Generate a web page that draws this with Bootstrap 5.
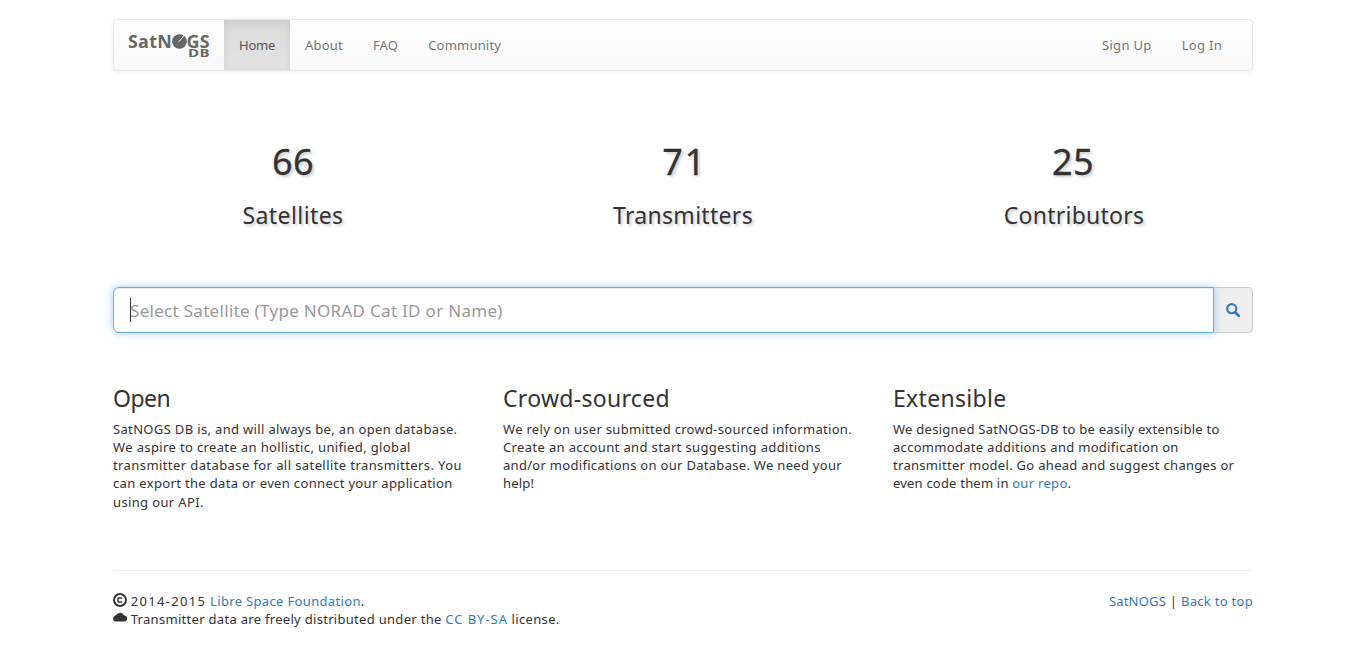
<!DOCTYPE html>
<html lang="en">
<head>
<meta charset="utf-8">
<meta name="viewport" content="width=device-width, initial-scale=1">
<title>SatNOGS DB</title>
<link href="https://cdn.jsdelivr.net/npm/bootstrap@5.3.0/dist/css/bootstrap.min.css" rel="stylesheet">
<script src="https://cdn.jsdelivr.net/npm/bootstrap@5.3.0/dist/js/bootstrap.bundle.min.js" defer></script>
<style>
body{font:13px/18.2px "Noto Sans","Open Sans",sans-serif;color:#333;background:#fff;letter-spacing:.3px;overflow:hidden;padding-left:1px}
a{color:#337ab7;text-decoration:none}
.page{max-width:1170px;--bs-gutter-x:30px}
.page .row{--bs-gutter-x:30px}
.topbar{height:52px;margin-top:19px;border:1px solid #e7e7e7;border-radius:4px;background:linear-gradient(#fff,#f8f8f8);box-shadow:inset 0 1px 0 rgba(255,255,255,.15),0 1px 5px rgba(0,0,0,.075)}
.topbar .nav-link{color:#777;padding:0 15px;line-height:50px;height:50px}
.topbar .nav-link.active{color:#555;background:linear-gradient(#dbdbdb,#e2e2e2);box-shadow:inset 0 3px 9px rgba(0,0,0,.075);letter-spacing:-.25px}
.topbar .login{margin-right:15px}
.logo{display:block;margin:0 14px;width:82px;height:50px}
.stats{margin-top:66px;text-shadow:2px 2px 3px #ccc}
.stats h1{font-size:36px;line-height:40px;font-weight:400;margin:5px 0 20px;letter-spacing:.3px;-webkit-text-stroke:.3px #333}
.stats h1.k-1{letter-spacing:1.6px;padding-left:3px}
.stats h3{font-size:23px;line-height:26px;font-weight:400;margin:0}
.stats h3.nudge{padding-left:2px}
.finder{margin-top:59px;height:46px}
.finder .form-control{font-size:17px;line-height:24px;padding:11px 16px 9px;border:1px solid #66afe9;border-radius:6px 0 0 6px;box-shadow:inset 0 1px 1px rgba(0,0,0,.075),0 0 8px rgba(102,175,233,.6);position:relative;z-index:6;letter-spacing:.3px}
.finder .form-control::placeholder{color:#999;opacity:1}
.finder .btn{width:40px;padding:0 0 3px;background:#eee;border:1px solid #ccc;border-radius:0 4px 4px 0}
.caret{position:absolute;left:17.5px;top:11px;width:1px;height:24px;background:#333;z-index:7}
.about{margin-top:52px;height:185px}
.about h3{font-size:23px;line-height:26px;font-weight:400;margin:0 0 8.8px}
.about p{white-space:nowrap;margin:0}
.foot{border-top:1px solid #eee;padding-top:21px}
.foot svg{vertical-align:-1px}
/* tracking steps */
.k-m45{letter-spacing:-.5px}.k-20{letter-spacing:.2px}.k-26{letter-spacing:.26px}
.k-34{letter-spacing:.34px}.k-37{letter-spacing:.365px}.k-41{letter-spacing:.41px}.k-95{letter-spacing:.95px}.k-133{letter-spacing:1.33px}
</style>
</head>
<body>
<div class="container page">
  <nav class="topbar d-flex">
    <a href="#" class="logo"><svg width="82" height="50" fill="#666" font-family="Open Sans,Noto Sans,sans-serif" font-weight="700"><text x="0" y="28.300" font-size="18.500" textLength="44" lengthAdjust="spacingAndGlyphs">SatN</text><circle cx="51.500" cy="21.500" r="7.300"/><path d="M50.500 21.500L53 19.500L57 14" fill="none" stroke="#fafafa" stroke-width="1"/><text x="58.500" y="28.300" font-size="18.500" textLength="23.500" lengthAdjust="spacingAndGlyphs">GS</text><text x="60" y="37" font-size="10" textLength="22" lengthAdjust="spacingAndGlyphs">DB</text></svg></a>
    <div class="nav flex-nowrap flex-grow-1">
      <a class="nav-link active" href="#">Home</a><a class="nav-link k-20" href="#">About</a><a class="nav-link k-20" href="#">FAQ</a><a class="nav-link k-20" href="#">Community</a>
      <a class="nav-link ms-auto k-34" href="#">Sign Up</a><a class="nav-link login" href="#">Log In</a>
    </div>
  </nav>
  <div class="row stats text-center">
    <div class="col-4"><h1>66</h1><h3 class="k-41">Satellites</h3></div>
    <div class="col-4"><h1 class="k-1">71</h1><h3>Transmitters</h3></div>
    <div class="col-4"><h1>25</h1><h3 class="k-26 nudge">Contributors</h3></div>
  </div>
  <div class="input-group finder">
    <input class="form-control" placeholder="Select Satellite (Type NORAD Cat ID or Name)">
    <span class="caret"></span>
    <button class="btn" aria-label="Search"><svg width="14" height="14" viewBox="0 0 14 14" fill="none" stroke="#337ab7"><circle cx="5.700" cy="5.700" r="4.600" stroke-width="2.100"/><path d="M9.200 9.200l3.500 3.500" stroke-width="2.700" stroke-linecap="round"/></svg></button>
  </div>
  <div class="row about">
    <div class="col-4"><h3 class="k-m45">Open</h3><p><span class="k-34">SatNOGS DB is, and will always be, an open database.</span><br><span class="k-37">We aspire to create an hollistic, unified, global</span><br><span class="k-41">transmitter database for all satellite transmitters. You</span><br><span class="k-34">can export the data or even connect your application</span><br><span class="k-37">using our API.</span></p></div>
    <div class="col-4"><h3>Crowd-sourced</h3><p>We rely on user submitted crowd-sourced information.<br><span class="k-37">Create an account and start suggesting additions</span><br>and/or modifications on our Database. We need your<br><span class="k-20">help!</span></p></div>
    <div class="col-4"><h3>Extensible</h3><p><span class="k-26">We designed SatNOGS-DB to be easily extensible to</span><br>accommodate additions and modification on<br>transmitter model. Go ahead and suggest changes or<br><span class="k-20">even code them in </span><a href="#">our repo</a>.</p></div>
  </div>
  <footer class="foot d-flex justify-content-between">
    <div><svg width="14" height="14" viewBox="0 0 14 14"><circle cx="7" cy="7" r="6" fill="none" stroke="#333" stroke-width="2"/><path d="M9 5.800Q8.500 4.700 7 4.700Q4.800 4.700 4.800 7T7 9.300Q8.500 9.300 9 8.200" fill="none" stroke="#333" stroke-width="1.500"/></svg> <span class="k-133">2014-2015</span> <a href="#" class="k-34">Libre Space Foundation</a>.<br><svg width="14" height="14" viewBox="0 0 14 14"><path fill="#333" d="M3 10.500A2.900 2.900 0 0 1 2.200 4.800A2.500 2.500 0 0 1 4 3.200A4 4 0 0 1 11 4.500A3 3 0 0 1 11.300 10.500Z"/></svg> <span>Transmitter data are freely distributed under the</span> <a href="#" class="k-95">CC BY-SA</a> <span class="k-34">license.</span></div>
    <div><a href="#" class="k-20">SatNOGS</a> | <a href="#">Back to top</a></div>
  </footer>
</div>
</body>
</html>
